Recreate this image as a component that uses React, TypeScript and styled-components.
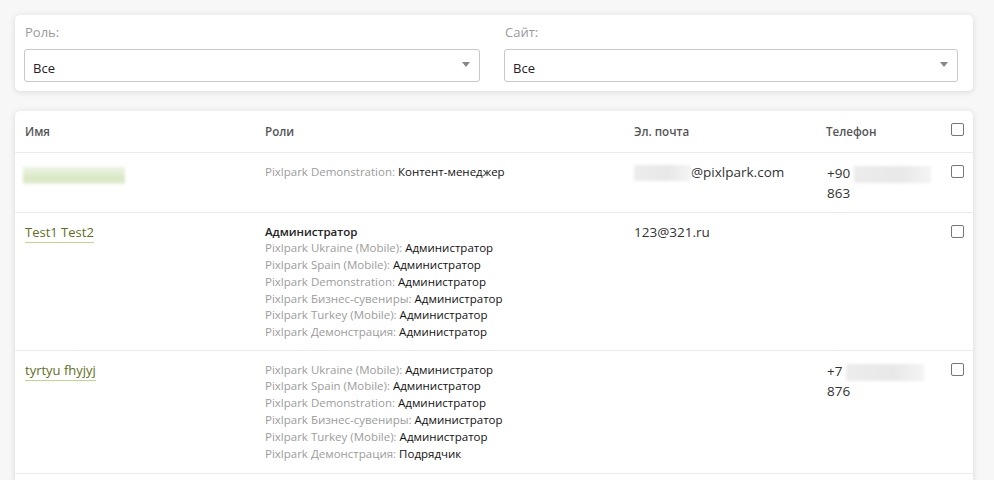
import * as React from 'react';
import styled, { createGlobalStyle } from 'styled-components';

const GlobalStyle = createGlobalStyle`
  html, body {
    margin: 0;
    padding: 0;
    background: #f7f7f7;
    overflow: hidden;
  }
  body {
    font-family: 'Open Sans', 'Noto Sans', sans-serif;
    color: #333;
  }
`;

const Page = styled.div`
  padding: 15px 21px 0 15px;
  display: flex;
  flex-direction: column;
  gap: 20px;
  height: 480px;
  box-sizing: border-box;
`;

const Card = styled.div`
  background: #fff;
  border-radius: 5px;
  box-shadow: 0 1px 6px rgba(0, 0, 0, 0.12);
`;

const FilterCard = styled(Card)`
  display: grid;
  grid-template-columns: 456px 454px;
  column-gap: 24px;
  padding: 7px 15px 9px 9px;
`;

const Field = styled.div`
  display: flex;
  flex-direction: column;
  gap: 7px;
`;

const FieldLabel = styled.div`
  font-size: 13px;
  line-height: 20px;
  color: #9a9a9a;
  padding-left: 1px;
`;

const Select = styled.div`
  position: relative;
  height: 33px;
  border: 1px solid #c8c8c8;
  border-radius: 3px;
  box-sizing: border-box;
  display: flex;
  align-items: center;
  padding: 5px 8px 0;
  font-size: 13px;
  color: #222;
`;

const Caret = styled.span`
  position: absolute;
  right: 9px;
  top: 12px;
  width: 0;
  height: 0;
  border-left: 4px solid transparent;
  border-right: 4px solid transparent;
  border-top: 5px solid #888;
`;

const TableCard = styled(Card)`
  flex: 1;
  padding: 0 10px;
  border-bottom-left-radius: 0;
  border-bottom-right-radius: 0;
`;

const Row = styled.div<{ head?: boolean; extra?: number }>`
  display: grid;
  grid-template-columns: 240px 369px 192px 125px 1fr;
  border-top: ${(p) => (p.head ? 'none' : '1px solid #eaeaea')};
  margin: 0 -10px;
  padding: ${(p) => (p.head ? '11px 10px 10px' : `9px 10px ${9 + (p.extra ?? 0)}px`)};
`;

const HeadCell = styled.div`
  font-size: 11.6px;
  font-weight: 600;
  line-height: 20px;
  color: #555;
`;

const Cell = styled.div`
  font-size: 13.5px;
  line-height: 20px;
  color: #333;
  min-width: 0;
`;

const NameLink = styled.a`
  display: inline-block;
  font-size: 13px;
  line-height: 20px;
  color: #5f6f1c;
  text-decoration: none;
  border-bottom: 1px solid #bcdb8a;
`;

const Blur = styled.span<{ w: number; h: number; green?: boolean }>`
  display: inline-block;
  vertical-align: middle;
  width: ${(p) => p.w}px;
  height: ${(p) => p.h}px;
  background: ${(p) =>
    p.green
      ? 'linear-gradient(180deg, #eef4e4 0%, #d8e7c2 70%, #e4eed5 100%)'
      : 'linear-gradient(90deg, #ececec 0%, #e8e8e8 60%, #f4f4f4 100%)'};
  filter: blur(1.5px);
`;

const NameBlur = styled(Blur)`
  margin: 4px 0 0 -2px;
`;

const RoleList = styled.div`
  display: flex;
  flex-direction: column;
  font-size: 11.5px;
  line-height: 16.8px;
  padding-top: 1.5px;
  color: #111;
`;

const RoleMain = styled.div`
  font-weight: 600;
  color: #222;
`;

const Site = styled.span`
  color: #9c9c9c;
`;

const Phone = styled.div`
  padding-top: 1px;
  padding-left: 1px;
`;

const Box = styled.span<{ head?: boolean }>`
  display: block;
  width: 13px;
  height: 13px;
  box-sizing: border-box;
  border: 1px solid #767676;
  border-radius: 2px;
  margin-top: ${(p) => (p.head ? '1px' : '3px')};
`;

type Role = [string, string];

const roles2: Role[] = [
  ['Pixlpark Ukraine (Mobile)', 'Администратор'],
  ['Pixlpark Spain (Mobile)', 'Администратор'],
  ['Pixlpark Demonstration', 'Администратор'],
  ['Pixlpark Бизнес-сувениры', 'Администратор'],
  ['Pixlpark Turkey (Mobile)', 'Администратор'],
  ['Pixlpark Демонстрация', 'Администратор'],
];

const roles3: Role[] = [
  ['Pixlpark Ukraine (Mobile)', 'Администратор'],
  ['Pixlpark Spain (Mobile)', 'Администратор'],
  ['Pixlpark Demonstration', 'Администратор'],
  ['Pixlpark Бизнес-сувениры', 'Администратор'],
  ['Pixlpark Turkey (Mobile)', 'Администратор'],
  ['Pixlpark Демонстрация', 'Подрядчик'],
];

const Roles = ({ main, items }: { main?: string; items: Role[] }) => (
  <RoleList>
    {main && <RoleMain>{main}</RoleMain>}
    {items.map(([site, role], i) => (
      <div key={i}>
        <Site>{site}:</Site> {role}
      </div>
    ))}
  </RoleList>
);

export default function App() {
  return (
    <>
      <GlobalStyle />
      <Page>
        <FilterCard>
          <Field>
            <FieldLabel>Роль:</FieldLabel>
            <Select>
              Все
              <Caret />
            </Select>
          </Field>
          <Field>
            <FieldLabel>Сайт:</FieldLabel>
            <Select>
              Все
              <Caret />
            </Select>
          </Field>
        </FilterCard>

        <TableCard>
          <Row head>
            <HeadCell>Имя</HeadCell>
            <HeadCell>Роли</HeadCell>
            <HeadCell>Эл. почта</HeadCell>
            <HeadCell>Телефон</HeadCell>
            <Box head />
          </Row>

          <Row>
            <Cell>
              <NameBlur w={102} h={17} green />
            </Cell>
            <Cell>
              <Roles items={[['Pixlpark Demonstration', 'Контент-менеджер']]} />
            </Cell>
            <Cell>
              <Blur w={57} h={16} />
              @pixlpark.com
            </Cell>
            <Phone>
              <Cell>
                +90 <Blur w={77} h={17} />
              </Cell>
              <Cell>863</Cell>
            </Phone>
            <Box />
          </Row>

          <Row>
            <Cell>
              <NameLink href="#">Test1 Test2</NameLink>
            </Cell>
            <Cell>
              <Roles main="Администратор" items={roles2} />
            </Cell>
            <Cell>123@321.ru</Cell>
            <Cell />
            <Box />
          </Row>

          <Row extra={2}>
            <Cell>
              <NameLink href="#">tyrtyu fhyjyj</NameLink>
            </Cell>
            <Cell>
              <Roles items={roles3} />
            </Cell>
            <Cell />
            <Phone>
              <Cell>
                +7 <Blur w={78} h={17} />
              </Cell>
              <Cell>876</Cell>
            </Phone>
            <Box />
          </Row>

          <Row />
        </TableCard>
      </Page>
    </>
  );
}
